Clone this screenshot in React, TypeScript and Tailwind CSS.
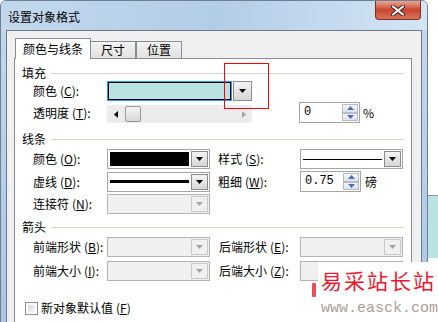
import React from 'react';

function Tri({ disabled, dir = 'down' }: { disabled?: boolean; dir?: 'down' | 'left' | 'right' }) {
  const fill = disabled ? '#a6a6a6' : '#000';
  if (dir === 'left') {
    return (
      <svg width="4" height="7" viewBox="0 0 4 7">
        <path d="M4 0v7L0 3.5z" fill={fill} />
      </svg>
    );
  }
  if (dir === 'right') {
    return (
      <svg width="4" height="7" viewBox="0 0 4 7">
        <path d="M0 0v7l4-3.5z" fill={fill} />
      </svg>
    );
  }
  return (
    <svg width="7" height="4" viewBox="0 0 7 4">
      <path d="M0 0h7L3.5 4z" fill={fill} />
    </svg>
  );
}

function DropBtn({ disabled, w = 'w-[17px]' }: { disabled?: boolean; w?: string }) {
  return (
    <div
      className={`${w} h-full shrink-0 flex items-center justify-center border ${
        disabled
          ? 'border-[#c9c9c9] bg-[#f0f0f0]'
          : 'border-[#8c8c8c] bg-linear-to-b from-[#f5f5f5] to-[#d6d6d6]'
      }`}
    >
      <Tri disabled={disabled} />
    </div>
  );
}

function Combo({ disabled, children }: { disabled?: boolean; children?: React.ReactNode }) {
  return (
    <div
      className={`w-[103px] h-[20px] shrink-0 flex gap-[1px] p-[1px] border ${
        disabled ? 'border-[#b4b4b4] bg-[#f0f0f0]' : 'border-[#a5a5a5] bg-white'
      }`}
    >
      <div className="flex-1 flex items-center px-[1px]">{children}</div>
      <DropBtn disabled={disabled} />
    </div>
  );
}

function SpinBtn({ up }: { up?: boolean }) {
  return (
    <div className="flex-1 flex items-center justify-center border border-[#b5bcc8] bg-linear-to-b from-[#f4f6f9] to-[#dde2ea]">
      <svg width="7" height="4" viewBox="0 0 7 4">
        <path d={up ? 'M0 4h7L3.5 0z' : 'M0 0h7L3.5 4z'} fill="#4d6dc4" />
      </svg>
    </div>
  );
}

function Spin({ value }: { value: string }) {
  return (
    <div className="w-[61px] h-[21px] shrink-0 flex p-[1px] border border-[#a5a5a5] bg-white">
      <div className="flex-1 pl-[3px] text-[12px] leading-[17px] font-['Liberation_Mono',monospace]">{value}</div>
      <div className="w-[16px] flex flex-col">
        <SpinBtn up />
        <SpinBtn />
      </div>
    </div>
  );
}

function Label({ text, k, w = 'w-[74px]' }: { text: string; k: string; w?: string }) {
  return (
    <div className={`${w} shrink-0 whitespace-nowrap text-[12px] leading-[14px]`}>
      {text}
      <span className="ml-[3px]">(</span>
      <span className="underline">{k}</span>
      <span>):</span>
    </div>
  );
}

function Heading({ title, className }: { title: string; className: string }) {
  return (
    <div className={`flex items-center h-[14px] ${className}`}>
      <span className="text-[12px] leading-[14px]">{title}</span>
      <div className="flex-1 h-px bg-[#d4d2c2] ml-[5px]" />
    </div>
  );
}

function CloseBtn() {
  return (
    <div className="w-[46px] h-[19px] mr-[6px] flex items-center justify-center rounded-b-[4px] border border-t-0 border-[#7b3024] bg-linear-to-b from-[#e9a593] via-[#c8452f] to-[#d9735a]">
      <svg width="14" height="11" viewBox="0 0 14 11">
        <path d="M2 1.5l10 8M12 1.5l-10 8" stroke="#4a1a14" strokeWidth="4" strokeLinecap="round" />
        <path d="M2 1.5l10 8M12 1.5l-10 8" stroke="#fff" strokeWidth="2.2" strokeLinecap="round" />
      </svg>
    </div>
  );
}

export default function App() {
  return (
    <div className="w-[438px] h-[322px] overflow-hidden relative bg-white flex items-start font-['Noto_Sans_CJK_SC','Noto_Sans',sans-serif] text-black">
      {/* window */}
      <div className="w-[428px] h-[340px] shrink-0 flex flex-col rounded-t-[6px] border border-[#6f8094] bg-linear-to-b from-[#c4d8ed] to-[#aac6e3]">
        <div className="h-[29px] flex items-start justify-between rounded-t-[5px] bg-linear-to-r from-[#c3d8ed] via-[#b2cde7] to-[#d4e5f5]">
          <div className="pl-[7px] pt-[9px] text-[12px] leading-[14px]">设置对象格式</div>
          <CloseBtn />
        </div>

        <div className="flex-1 mx-[5px] flex flex-col border border-[#6e7886] bg-[#f0f0f0] pt-[7px] pl-[7px] pr-[9px]">
          {/* tabs */}
          <div className="flex items-end h-[20px] pl-[1px]">
            <div className="h-[21px] w-[76px] -mb-px relative z-10 flex items-center justify-center border border-b-0 border-[#898c95] bg-white text-[12px] leading-[14px]">
              颜色与线条
            </div>
            <div className="h-[17px] w-[46px] -ml-px flex items-center justify-center border border-b-0 border-[#898c95] bg-linear-to-b from-[#f3f3f3] to-[#e1e1e1] text-[12px] leading-[14px]">
              尺寸
            </div>
            <div className="h-[17px] w-[46px] flex items-center justify-center border border-b-0 border-[#898c95] bg-linear-to-b from-[#f3f3f3] to-[#e1e1e1] text-[12px] leading-[14px]">
              位置
            </div>
          </div>

          {/* panel */}
          <div className="flex-1 flex flex-col border border-[#898c95] bg-white pl-[7px] pr-[7px]">
            <Heading title="填充" className="mt-[7px]" />

            <div className="flex items-center h-[20px] mt-[1px] pl-[11px]">
              <Label text="颜色" k="C" />
              <div className="w-[145px] h-[20px] flex gap-[1px]">
                <div className="flex-1 border border-[#3399ff] flex">
                  <div className="flex-1 border border-black bg-[#b9e1e2]" />
                </div>
                <DropBtn w="w-[19px]" />
              </div>
            </div>

            <div className="flex items-center h-[21px] mt-[1px] pl-[11px]">
              <Label text="透明度" k="T" />
              <div className="w-[145px] h-[18px] flex items-center bg-[#ececec] self-end">
                <div className="w-[18px] flex justify-center">
                  <Tri dir="left" />
                </div>
                <div className="w-[16px] h-[16px] rounded-[2px] border border-[#979797] bg-linear-to-b from-[#f4f4f4] to-[#d8d8d8]" />
                <div className="flex-1" />
                <div className="w-[17px] flex justify-center">
                  <Tri dir="right" disabled />
                </div>
              </div>
              <div className="ml-[47px]">
                <Spin value="0" />
              </div>
              <div className="ml-[3px] text-[12px] leading-[14px]">%</div>
            </div>

            <Heading title="线条" className="mt-[9px]" />

            <div className="flex items-center h-[20px] mt-[3px] pl-[11px]">
              <Label text="颜色" k="O" />
              <Combo>
                <div className="w-full h-[14px] bg-black" />
              </Combo>
              <div className="ml-[8px]">
                <Label text="样式" k="S" w="w-[82px]" />
              </div>
              <Combo>
                <div className="w-full h-px bg-black" />
              </Combo>
            </div>

            <div className="flex items-center h-[21px] mt-[2px] pl-[11px]">
              <Label text="虚线" k="D" />
              <Combo>
                <div className="w-full h-[3px] bg-black" />
              </Combo>
              <div className="ml-[8px]">
                <Label text="粗细" k="W" w="w-[82px]" />
              </div>
              <Spin value="0.75" />
              <div className="ml-[4px] text-[12px] leading-[14px]">磅</div>
            </div>

            <div className="flex items-center h-[20px] mt-[2px] pl-[11px]">
              <Label text="连接符" k="N" />
              <Combo disabled />
            </div>

            <Heading title="箭头" className="mt-[6px]" />

            <div className="flex items-center h-[20px] mt-[3px] pl-[11px]">
              <Label text="前端形状" k="B" />
              <Combo disabled />
              <div className="ml-[9px]">
                <Label text="后端形状" k="E" w="w-[81px]" />
              </div>
              <Combo disabled />
            </div>

            <div className="flex items-center h-[21px] mt-[3px] pl-[11px]">
              <Label text="前端大小" k="I" />
              <Combo disabled />
              <div className="ml-[9px]">
                <Label text="后端大小" k="Z" w="w-[81px]" />
              </div>
              <Combo disabled />
            </div>

            <div className="flex items-center h-[14px] mt-[20px] pl-[3px]">
              <div className="w-[13px] h-[13px] border border-[#8e8f8f] p-[2px] bg-white">
                <div className="w-full h-full bg-linear-to-br from-[#d9d9d9] to-[#f7f7f7]" />
              </div>
              <div className="ml-[3px] text-[12px] leading-[14px] whitespace-nowrap">
                新对象默认值<span className="ml-[3px]">(</span>
                <span className="underline">F</span>)
              </div>
            </div>
          </div>
        </div>
      </div>

      {/* window behind */}
      <div className="flex-1 flex flex-col">
        <div className="mt-[195px] h-[63px] border-t border-[#8d9ba3] bg-[#b9e2e2]" />
      </div>

      {/* annotation */}
      <div className="absolute left-[224px] top-[63px] w-[45px] h-[46px] border border-[#ff0000]" />

      {/* watermark */}
      <div className="absolute left-[312px] top-[283px] w-[4px] h-[14px] bg-[#e8202e] rounded-[1px] opacity-80" />
      <div className="absolute left-[318px] top-[262px] w-[120px] h-[60px] bg-white">
        <div className="pl-[3px] pt-[6px] text-[21px] leading-[24px] tracking-[2px] text-[#ee1530] whitespace-nowrap">
          易采站长站
        </div>
        <div className="pl-[3px] mt-[9px] text-[15px] leading-[15px] text-[#aaa0a0] whitespace-nowrap font-['Liberation_Mono',monospace]">
          www.easck.com
        </div>
      </div>
    </div>
  );
}
